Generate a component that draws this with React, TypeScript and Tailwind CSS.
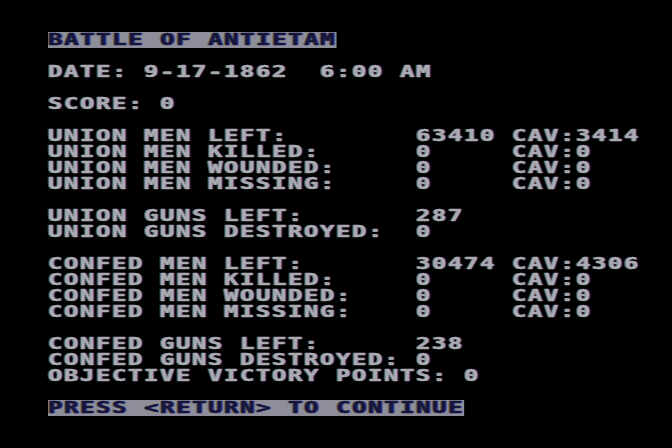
import React from "react";

type Row = { text: string; inverse?: boolean };

const pad = (s: string, n: number) => s.padEnd(n, " ");

const stat = (label: string, value: string, cav?: string) =>
  pad(label, 23) + (cav !== undefined ? pad(value, 6) + "CAV:" + cav : value);

const rows: Row[] = [
  { text: "BATTLE OF ANTIETAM", inverse: true },
  { text: "" },
  { text: "DATE: 9-17-1862  6:00 AM" },
  { text: "" },
  { text: "SCORE: 0" },
  { text: "" },
  { text: stat("UNION MEN LEFT:", "63410", "3414") },
  { text: stat("UNION MEN KILLED:", "0", "0") },
  { text: stat("UNION MEN WOUNDED:", "0", "0") },
  { text: stat("UNION MEN MISSING:", "0", "0") },
  { text: "" },
  { text: stat("UNION GUNS LEFT:", "287") },
  { text: stat("UNION GUNS DESTROYED:", "0") },
  { text: "" },
  { text: stat("CONFED MEN LEFT:", "30474", "4306") },
  { text: stat("CONFED MEN KILLED:", "0", "0") },
  { text: stat("CONFED MEN WOUNDED:", "0", "0") },
  { text: stat("CONFED MEN MISSING:", "0", "0") },
  { text: "" },
  { text: stat("CONFED GUNS LEFT:", "238") },
  { text: "CONFED GUNS DESTROYED: 0" },
  { text: "OBJECTIVE VICTORY POINTS: 0" },
  { text: "" },
  { text: "PRESS <RETURN> TO CONTINUE", inverse: true },
];

function ScreenLine({ row }: { row: Row }) {
  return (
    <div className="flex h-4 whitespace-pre">
      {row.text && (
        <span
          className={
            "block h-4 origin-left scale-x-[1.45] text-[16.5px] leading-[16px] font-bold tracking-[1.1px] [-webkit-text-stroke:0.35px_currentColor] " +
            (row.inverse
              ? "bg-[#8e8e9a] text-[#16163c] [text-shadow:-1px_0_rgba(60,60,20,0.5),1px_0_rgba(20,20,140,0.6)]"
              : "text-[#aaaab2] [text-shadow:-1px_0_rgba(150,150,70,0.55),1px_0_rgba(70,70,210,0.6)]")
          }
        >
          {row.text}
        </span>
      )}
    </div>
  );
}

export default function App() {
  return (
    <div
      className="h-[448px] w-[672px] overflow-hidden bg-black pl-12 pt-8"
      style={{ fontFamily: '"DejaVu Sans Mono", "Liberation Mono", monospace' }}
    >
      {rows.map((row, i) => (
        <ScreenLine key={i} row={row} />
      ))}
    </div>
  );
}
